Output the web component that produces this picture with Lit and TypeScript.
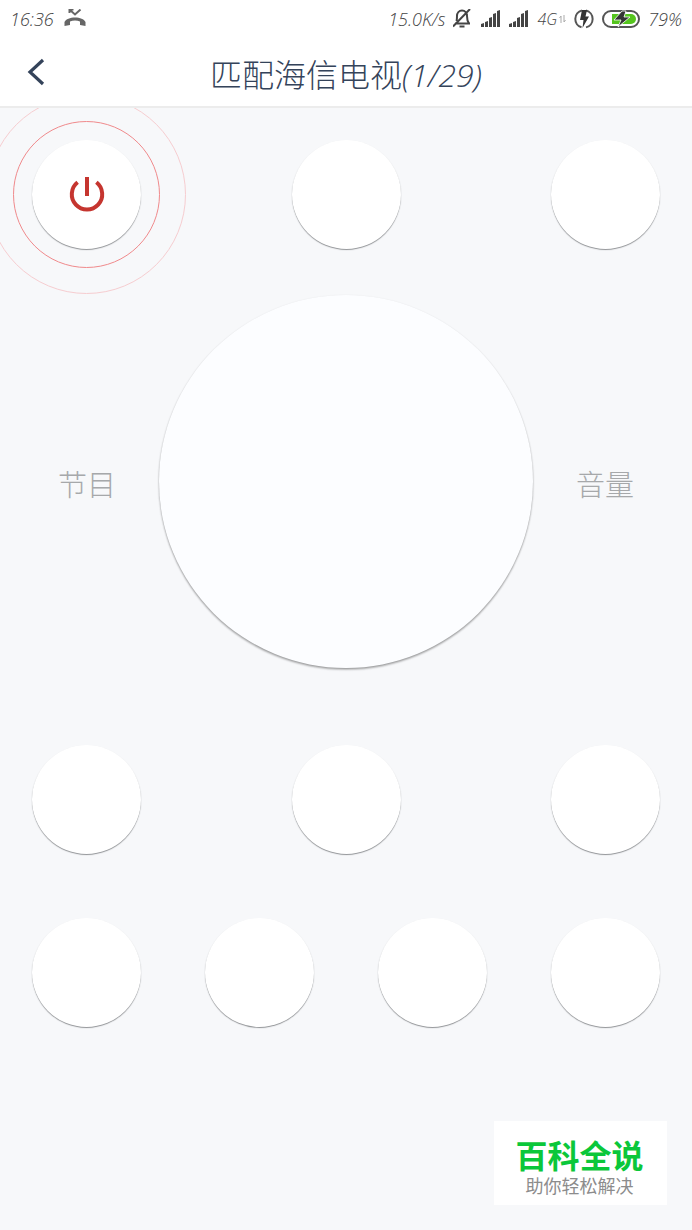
import { LitElement, html, css, svg } from "lit";
import { customElement } from "lit/decorators.js";

const signal = () => html`<svg class="icon" width="20" height="18" viewBox="0 0 20 18" aria-hidden="true">
  <path fill="#444" d="M0 17v-3l3-1v4zM4 17v-5l3-1v6zM8 17V8l3-1v10zM12 17V4l3-1v14zM16 17V1l3-1v17z" />
</svg>`;

@customElement("status-bar")
class StatusBar extends LitElement {
  static styles = css`
    :host {
      display: flex;
      align-items: center;
      justify-content: space-between;
      height: 38px;
      padding: 0 10px;
      font: italic 300 18px/24px "Open Sans", "Noto Sans", sans-serif;
      color: #444;
    }
    .side {
      display: flex;
      align-items: center;
      gap: 9px;
    }
    .right {
      gap: 8px;
    }
    .icon {
      display: block;
      flex: none;
    }
    .network {
      display: flex;
      align-items: center;
      gap: 2px;
      font-size: 16px;
    }
  `;
  render() {
    return html`
      <div class="side">
        <span>16:36</span>
        <svg class="icon" width="24" height="20" viewBox="-1 1 24 20" aria-hidden="true">
          <path d="M5.500 5V1.500h4M6 2l5 4.500 5.500-5" fill="none" stroke="#666" stroke-width="2" />
          <path d="M.5 18v-4C2 11 6 9.500 11 9.500S20 11 21.500 14v4l-5.500-1v-3.500c-3-1.300-7-1.300-10 0V17z" fill="#666" />
        </svg>
      </div>
      <div class="side right">
        <span>15.0K/s</span>
        <svg class="icon" width="20" height="20" viewBox="1 1 20 20" aria-hidden="true">
          <g fill="none" stroke="#444" stroke-width="2">
            <path d="M3 15.500h15M4.500 13c.5-1.500.5-3 .5-5 0-3 2-5.500 5-5.500s5 2.500 5 5.500c0 4 .5 5.500 2 7.500M1 18.500 18 1" />
            <path d="M7.500 18.500h5" />
          </g>
        </svg>
        ${signal()} ${signal()}
        <span class="network">
          4G
          <svg class="icon" width="7" height="8" viewBox="0 0 7 8" aria-hidden="true">
            <path d="M2 8V1L.5 3M5 0v7l1.500-2" fill="none" stroke="#aaa" />
          </svg>
        </span>
        <svg class="icon" width="20" height="20" viewBox="0 0 20 20" aria-hidden="true">
          <path d="M8 1.500a8.700 8.700 0 0 0-.5 16.800M12 1.500a8.700 8.700 0 0 1 0 16.900" fill="none" stroke="#555" stroke-width="2" />
          <path d="M8 1h5l-1.500 6.500H15L8.500 19l1-8H6z" fill="#333" />
        </svg>
        <svg class="icon" width="38" height="18" viewBox="1 0 38 18" aria-hidden="true">
          <rect x="2" y="1" width="36" height="16" rx="8" fill="#fff" stroke="#555" stroke-width="2" />
          <path d="M11 4h19a5 5 0 0 1 0 10H11z" fill="#55c51e" />
          <path d="M21 1h4l-2 6h6L17 17l3-7h-7z" fill="#333" stroke="#fff" stroke-width=".8" />
        </svg>
        <span>79%</span>
      </div>
    `;
  }
}

@customElement("round-key")
class RoundKey extends LitElement {
  static properties = { label: {}, power: { type: Boolean } };
  declare label: string;
  declare power: boolean;
  static styles = css`
    :host {
      display: block;
      position: relative;
      width: 109px;
      height: 109px;
    }
    .key {
      display: grid;
      place-items: center;
      width: 100%;
      height: 100%;
      padding: 0;
      border: 0;
      border-radius: 50%;
      background: #fff;
      box-shadow: 0 1px 1px rgba(60, 64, 68, 0.55);
    }
    .ring {
      position: absolute;
      box-sizing: border-box;
      border: 1px solid #f08a8c;
      border-radius: 50%;
      inset: -19px;
      pointer-events: none;
    }
    .outer {
      inset: -45px;
      border-color: #f6cdd0;
    }
  `;
  render() {
    return html`
      ${this.power ? html`<span class="ring outer"></span><span class="ring"></span>` : ""}
      <button class="key" type="button" aria-label=${this.label}>
        ${this.power
          ? html`<svg width="36" height="36" viewBox="0 1 36 36" aria-hidden="true">
              ${svg`<path d="M18 1v19M8.600 6.300a15.200 15.200 0 1 0 18.800 0" fill="none" stroke="#c5352f" stroke-width="4" />`}
            </svg>`
          : ""}
      </button>
    `;
  }
}

@customElement("app-root")
class AppRoot extends LitElement {
  static styles = css`
    :host {
      display: flex;
      flex-direction: column;
      position: relative;
      min-height: 100vh;
      background: #f7f8fa;
      font-family: "Open Sans", "Noto Sans CJK SC", sans-serif;
    }
    .top {
      background: #fff;
      border-bottom: 2px solid #ececec;
    }
    .bar {
      display: grid;
      grid-template-columns: 40px 1fr 40px;
      align-items: center;
      height: 68px;
      padding: 0 16px;
    }
    .back {
      display: grid;
      place-items: center;
      height: 40px;
      padding: 0;
      border: 0;
      background: none;
    }
    .title {
      margin: 0;
      padding-top: 4px;
      text-align: center;
      font: 300 32px/40px "Noto Sans CJK SC", sans-serif;
      color: #34435a;
    }
    .count {
      font-family: "Open Sans", sans-serif;
      font-style: italic;
      font-size: 32px;
    }
    .remote {
      flex: 1;
      padding: 32px;
      overflow: hidden;
    }
    .row {
      display: flex;
      justify-content: space-between;
    }
    .middle {
      display: grid;
      grid-template-columns: 110px 1fr 110px;
      align-items: center;
      justify-items: center;
      margin: 46px 0 77px;
    }
    .label {
      padding-top: 2px;
      font: 300 29px/40px "Noto Sans CJK SC", sans-serif;
      color: #a6a8aa;
    }
    .dial {
      width: 374px;
      height: 373px;
      padding: 0;
      border: 0;
      border-radius: 50%;
      background: #fcfdff;
      box-shadow: 0 1px 2px rgba(0, 0, 0, 0.25), 0 2px 2px rgba(0, 0, 0, 0.18);
    }
    .last {
      margin-top: 64px;
    }
    .mark {
      position: absolute;
      right: 25px;
      bottom: 25px;
      box-sizing: border-box;
      width: 173px;
      padding: 17px 2px 7px 0;
      background: #fff;
      text-align: center;
      font-family: "Liberation Sans", "Noto Sans CJK SC", sans-serif;
    }
    .brand {
      display: block;
      font-size: 32px;
      line-height: 38px;
      font-weight: 700;
      color: #0bc73a;
    }
    .motto {
      display: block;
      font-size: 18px;
      line-height: 22px;
      color: #8c8c8c;
    }
  `;
  render() {
    const keys = (names: string[]) => names.map((n) => html`<round-key .label=${n}></round-key>`);
    return html`
      <header class="top">
        <status-bar></status-bar>
        <div class="bar">
          <button class="back" type="button" aria-label="返回">
            <svg width="18" height="28" viewBox="0 0 18 28" aria-hidden="true">
              <path d="M16 2 3 14l13 12" fill="none" stroke="#34435a" stroke-width="3.200" />
            </svg>
          </button>
          <h1 class="title">匹配海信电视<span class="count">(1/29)</span></h1>
        </div>
      </header>
      <main class="remote">
        <div class="row">
          <round-key power .label=${"电源"}></round-key>
          ${keys(["按键 1", "按键 2"])}
        </div>
        <div class="middle">
          <span class="label">节目</span>
          <button class="dial" type="button" aria-label="方向"></button>
          <span class="label">音量</span>
        </div>
        <div class="row">${keys(["按键 3", "按键 4", "按键 5"])}</div>
        <div class="row last">${keys(["按键 6", "按键 7", "按键 8", "按键 9"])}</div>
      </main>
      <aside class="mark">
        <span class="brand">百科全说</span>
        <span class="motto">助你轻松解决</span>
      </aside>
    `;
  }
}
